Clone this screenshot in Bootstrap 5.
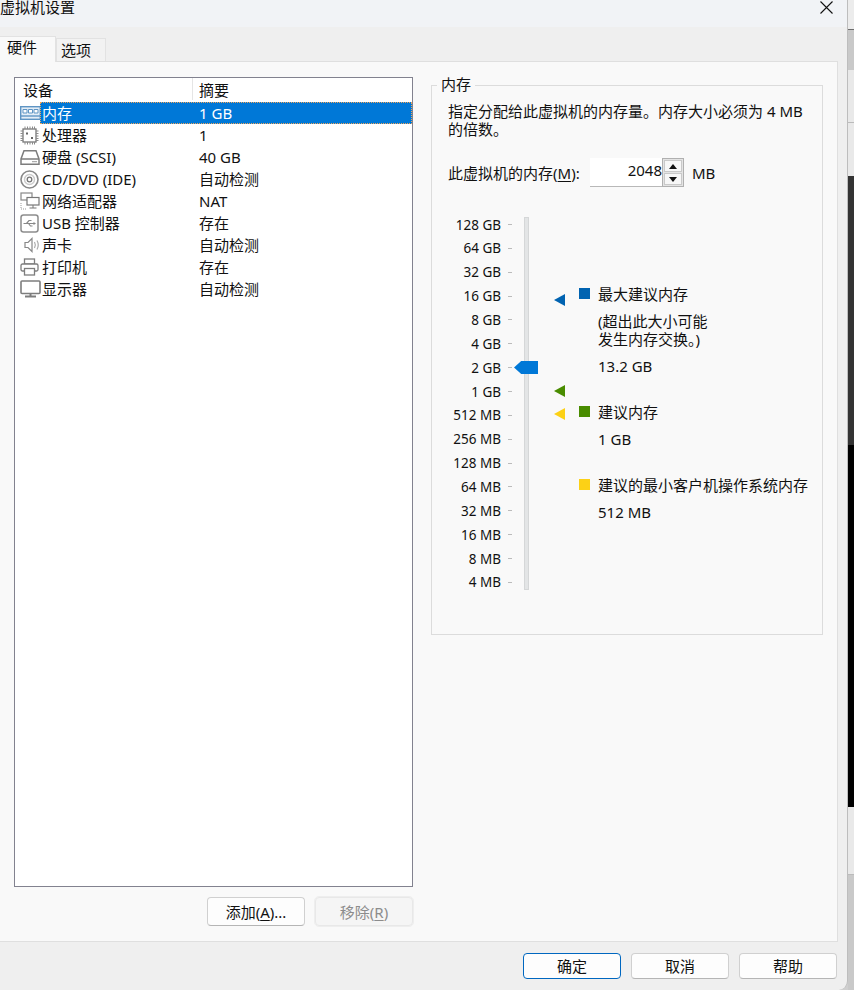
<!DOCTYPE html>
<html lang="zh">
<head>
<meta charset="utf-8">
<title>虚拟机设置</title>
<link href="https://cdn.jsdelivr.net/npm/bootstrap@5.3.0/dist/css/bootstrap.min.css" rel="stylesheet">
<style>
html,body{margin:0;height:990px;overflow:hidden;background:#cfcfcf}
body{font-family:"Noto Sans","Noto Sans CJK SC",sans-serif;font-size:15px;line-height:22px;color:#111}
.vmwin{width:848px;height:990px;background:#efefef;border-bottom-right-radius:9px;border-right:1px solid #bdbdbd;flex:none}
.edge{width:6px;height:990px;background:#e8e8e8;flex:none}
.edge-a{height:29px;background:#ececec}
.edge-b{height:41px;background:#c9c9c9;border-top:1px solid #6d6d6d}
.edge-c{height:53px;background:#e9e9e9;border-bottom:1px solid #bbb}
.edge-d{height:53px;background:#e9e9e9}
.edge-e{height:269px;background:#333}
.edge-f{height:362px;background:#000}
.edge-g{height:68px;background:#e9e9e9;border-bottom:1px solid #bbb}
.edge-h{flex:1;background:#c9c9c9}
.titlebar{height:27px;background:#f1f3f6;padding-right:14px}
.titlebar span{line-height:15px;font-size:15px}
.titlebar svg{margin-top:1px}
.tabrow{height:34px;padding-top:9px}
.vmtab{text-align:left;padding-left:4px;border:1px solid #e2e2e2;border-bottom:0;background:#f2f2f2;height:23px;margin-top:2px;width:50px;line-height:22px}
.vmtab.on{background:#f9f9f9;width:56px;height:26px;margin-top:0;padding-left:7px;line-height:21px;border-left:0;position:relative;z-index:1;margin-bottom:-1px}
.panel{width:838px;height:881px;background:#f9f9f9;border:1px solid #dfdfdf;border-left:0;padding:15px 14px 0 14px}
.leftcol{width:400px}
.devlist{height:810px;background:#fff;border:1px solid #82828f}
.devhead{height:24px;line-height:24px;padding-left:8px}
.devhead div:first-child{width:170px;border-right:1px solid #e5e5e5;height:22px}
.devhead div:last-child{padding-left:6px}
.devrow{height:22px;line-height:22px}
.devico{width:25px;height:22px;flex:none;padding-left:5px;display:flex;align-items:center}
.devico svg{flex:none}
.devname{width:153px;flex:none;padding-left:2px}
.devval{padding-left:6px}
.seltext{display:flex;flex:1}
.devrow.sel .seltext{background:#0078d7;color:#fff;outline:1px dotted #f2a65a;outline-offset:-1px}
.uline{text-decoration:underline;text-underline-offset:2px}
.winbtn{width:98px;height:29px;background:#fdfdfd;border:1px solid #d0d0d0;border-bottom-color:#b5b5b5;border-radius:4px;font-size:15px;line-height:26px;padding:0;color:#111}
.winbtn.pri{border-color:#0067c0}
.winbtn.off{background:#f5f5f5;color:#8c8c8c;border:1px solid #e8e8e8;outline:1px solid #eee}
.leftbtns{gap:10px;margin-top:10px}
.rightcol{margin-left:18px;width:392px;padding-top:8px}
.grp{height:550px;border:1px solid #dcdcdc;position:relative;padding:17px 15px 0 16px}
.grp-title{position:absolute;left:5px;top:-12px;background:#f9f9f9;padding:0 4px;line-height:20px}
.desc{line-height:17.500px;width:360px}
.spinrow{margin-top:20px;height:29px}
.spinlabel{width:134px;flex:none;white-space:nowrap}
.spinval{width:72px;height:29px;background:#fff;border-bottom:1px solid #b8b8b8;text-align:right;padding-right:0;line-height:25px;margin-left:8px}
.spinbtns{width:22px;height:29px;border:1px solid #b0b0b0;background:#e4e4e4;display:flex;flex-direction:column;gap:1px;padding:1px}
.spinbtns div{flex:1;background:#f7f7f7;display:flex;align-items:center;justify-content:center;border:1px solid #c9c9c9}
.spinunit{margin-left:8px}
.scale{margin-top:30px;height:373px}
.ticks{width:53px;text-align:right;margin-top:-4.500px;font-size:13.500px;flex:none}
.ticks div{height:23.870px;line-height:24px;white-space:nowrap}
.tickmarks{width:8px;margin-left:7px;margin-top:-4.500px;flex:none}
.tickmarks div{height:23.870px;display:flex;align-items:center}
.tickmarks i{display:block;width:4px;height:1px;background:#bbb}
.track{width:5px;height:373px;background:#e3e5e6;border:1px solid #d5d7d8;margin-left:8px;position:relative;flex:none}
.thumb{position:absolute;left:-11px;top:143px;width:24px;height:13px;background:#0078d7;clip-path:polygon(0 50%,30% 0,100% 0,100% 100%,30% 100%)}
.markers{width:40px;position:relative;flex:none}
.mark-arrow{position:absolute;left:25px;width:0;height:0;border-top:6px solid transparent;border-bottom:6px solid transparent;border-right-width:11px;border-right-style:solid}
.legend{position:relative;flex:1}
.lblock{position:absolute;left:10px}
.lblock .sq{position:absolute;left:0;top:3px;width:11px;height:11px}
.lblock p{margin:0 0 0 19px;white-space:nowrap;line-height:18px}
.lblock p+p{margin-top:9px}
.footer{padding:11px 10px 0 0;gap:10px}
.footer .winbtn{height:26px;line-height:23px;width:98px}
.arrow-blue{top:77px;border-right-color:#0063b1}
.arrow-green{top:168px;border-right-color:#498c00}
.arrow-yellow{top:191px;border-right-color:#fcd116}
.block-a{top:68px}.block-b{top:186px}.block-c{top:259px}
.sq-blue{background:#0063b1}.sq-green{background:#498c00}.sq-yellow{background:#fcd116}
</style>
</head>
<body class="d-flex">
<div class="vmwin d-flex flex-column">
  <div class="titlebar d-flex justify-content-between">
    <span>虚拟机设置</span>
    <svg width="13" height="13" viewBox="0 0 13 13" aria-hidden="true"><path d="M.5.5 12.500 12.500M12.500.5.5 12.500" stroke="#111" stroke-width="1.100" fill="none"/></svg>
  </div>
  <div class="tabrow d-flex align-items-start">
    <div class="vmtab on">硬件</div>
    <div class="vmtab">选项</div>
  </div>
  <div class="panel d-flex">
    <div class="leftcol d-flex flex-column">
      <div class="devlist">
        <div class="devhead d-flex"><div>设备</div><div>摘要</div></div>
        <div class="devrow sel d-flex"><div class="devico"><svg width="21" height="16" viewBox="0 0 21 16"><rect x=".7" y="1.700" width="19.600" height="12.600" fill="#e4eef7" stroke="#5f95c4" stroke-width="1.400"/><path d="M3 4.500h4v3.500H3zM8.500 4.500h4v3.500h-4zM14 4.500h4v3.500h-4z" fill="#fff" stroke="#5f95c4"/><path d="M1 11h19" stroke="#5f95c4" stroke-width="1.400"/></svg></div><div class="seltext"><div class="devname">内存</div><div class="devval">1 GB</div></div></div>
        <div class="devrow d-flex"><div class="devico"><svg width="19" height="19" viewBox="0 0 19 19"><rect x="3" y="3" width="13" height="13" fill="#fff" stroke="#777" stroke-width="1.300"/><path d="M5 .5v2.500M7.500 .5v2.500M10 .5v2.500M12.500 .5v2.500M14.500 .5v2.500M5 16v2.500M7.500 16v2.500M10 16v2.500M12.500 16v2.500M14.500 16v2.500M.5 5h2.500M.5 7.500h2.500M.5 10h2.500M.5 12.500h2.500M.5 14.500h2.500M16 5h2.500M16 7.500h2.500M16 10h2.500M16 12.500h2.500M16 14.500h2.500" stroke="#8a8a8a"/><rect x="6" y="6.500" width="2" height="2" fill="#666"/><rect x="11" y="11" width="2" height="2" fill="#666"/></svg></div><div class="devname">处理器</div><div class="devval">1</div></div>
        <div class="devrow d-flex"><div class="devico"><svg width="20" height="17" viewBox="0 0 20 17"><path d="M4 1.700h12l3 8.300v5.300H1V10z" fill="#fff" stroke="#7d7d7d" stroke-width="1.500"/><path d="M1 10h18" stroke="#7d7d7d" stroke-width="1.500"/><path d="M12 12.700h5" stroke="#999"/></svg></div><div class="devname">硬盘 (SCSI)</div><div class="devval">40 GB</div></div>
        <div class="devrow d-flex"><div class="devico"><svg width="19" height="19" viewBox="0 0 19 19"><circle cx="9.500" cy="9.500" r="8.500" fill="#fff" stroke="#888" stroke-width="1.600"/><circle cx="9.500" cy="9.500" r="5" fill="none" stroke="#ccc" stroke-width="1.500"/><circle cx="9.500" cy="9.500" r="2.300" fill="none" stroke="#777" stroke-width="1.300"/></svg></div><div class="devname">CD/DVD (IDE)</div><div class="devval">自动检测</div></div>
        <div class="devrow d-flex"><div class="devico"><svg width="20" height="18" viewBox="0 0 20 18"><rect x="1" y="1" width="11" height="7" fill="#fff" stroke="#888" stroke-width="1.200"/><rect x="7" y="5.500" width="12" height="7.500" fill="#fff" stroke="#777" stroke-width="1.200"/><path d="M13 13v3M9.500 16h7" stroke="#777"/><path d="M1 11v6h6" stroke="#999" stroke-dasharray="1 1" fill="none"/></svg></div><div class="devname">网络适配器</div><div class="devval">NAT</div></div>
        <div class="devrow d-flex"><div class="devico"><svg width="19" height="19" viewBox="0 0 19 19"><rect x="1" y="1" width="17" height="17" rx="2.500" fill="#fff" stroke="#8d8d8d" stroke-width="1.500"/><path d="M3.500 9.500h11M6.500 9.500l2.500-3h2.500M8.500 9.500l2 2.500h2" stroke="#888" stroke-width="1.200" fill="none"/><path d="M16 9.500 13.500 8v3z" fill="#888"/></svg></div><div class="devname">USB 控制器</div><div class="devval">存在</div></div>
        <div class="devrow d-flex"><div class="devico"><svg width="18" height="16" viewBox="0 0 18 16" class="ms-1"><path d="M1 5.500h3l4-4v13l-4-4H1z" fill="#fff" stroke="#888" stroke-width="1.200"/><path d="M10.500 5c1 1.800 1 4.200 0 6M13 3.500c1.500 2.700 1.500 6.300 0 9" fill="none" stroke="#aaa" stroke-width="1.200"/></svg></div><div class="devname">声卡</div><div class="devval">自动检测</div></div>
        <div class="devrow d-flex"><div class="devico"><svg width="19" height="18" viewBox="0 0 19 18"><rect x="4.500" y="1" width="10" height="5" fill="#fff" stroke="#7d7d7d" stroke-width="1.300"/><rect x="1" y="6" width="17" height="7" rx="1.500" fill="#fff" stroke="#7d7d7d" stroke-width="1.300"/><rect x="4.500" y="10.500" width="10" height="6.500" fill="#fff" stroke="#7d7d7d" stroke-width="1.300"/></svg></div><div class="devname">打印机</div><div class="devval">存在</div></div>
        <div class="devrow d-flex"><div class="devico"><svg width="21" height="18" viewBox="0 0 21 18"><rect x="1" y="1" width="19" height="12.500" rx="1" fill="#fff" stroke="#7d7d7d" stroke-width="1.600"/><path d="M5 16.500h11" stroke="#7d7d7d" stroke-width="2"/><path d="M10.500 14v2" stroke="#7d7d7d" stroke-width="2"/></svg></div><div class="devname">显示器</div><div class="devval">自动检测</div></div>
      </div>
      <div class="leftbtns d-flex justify-content-end">
        <button type="button" class="winbtn">添加(<span class="uline">A</span>)...</button>
        <button type="button" class="winbtn off" disabled>移除(<span class="uline">R</span>)</button>
      </div>
    </div>
    <div class="rightcol">
      <div class="grp">
        <div class="grp-title">内存</div>
        <div class="desc">指定分配给此虚拟机的内存量。内存大小必须为 4 MB 的倍数。</div>
        <div class="spinrow d-flex align-items-center">
          <div class="spinlabel">此虚拟机的内存(<span class="uline">M</span>):</div>
          <div class="spinval">2048</div>
          <div class="spinbtns">
            <div><svg width="8" height="5" viewBox="0 0 8 5"><path d="M4 0 8 5H0z" fill="#111"/></svg></div>
            <div><svg width="8" height="5" viewBox="0 0 8 5"><path d="M4 5 8 0H0z" fill="#111"/></svg></div>
          </div>
          <div class="spinunit">MB</div>
        </div>
        <div class="scale d-flex">
          <div class="ticks">
            <div>128 GB</div><div>64 GB</div><div>32 GB</div><div>16 GB</div><div>8 GB</div><div>4 GB</div><div>2 GB</div><div>1 GB</div><div>512 MB</div><div>256 MB</div><div>128 MB</div><div>64 MB</div><div>32 MB</div><div>16 MB</div><div>8 MB</div><div>4 MB</div>
          </div>
          <div class="tickmarks"><div><i></i></div><div><i></i></div><div><i></i></div><div><i></i></div><div><i></i></div><div><i></i></div><div><i></i></div><div><i></i></div><div><i></i></div><div><i></i></div><div><i></i></div><div><i></i></div><div><i></i></div><div><i></i></div><div><i></i></div><div><i></i></div></div>
          <div class="track"><div class="thumb"></div></div>
          <div class="markers">
            <div class="mark-arrow arrow-blue"></div>
            <div class="mark-arrow arrow-green"></div>
            <div class="mark-arrow arrow-yellow"></div>
          </div>
          <div class="legend">
            <div class="lblock block-a"><span class="sq sq-blue"></span><p>最大建议内存</p><p>(超出此大小可能<br>发生内存交换。)</p><p>13.2 GB</p></div>
            <div class="lblock block-b"><span class="sq sq-green"></span><p>建议内存</p><p>1 GB</p></div>
            <div class="lblock block-c"><span class="sq sq-yellow"></span><p>建议的最小客户机操作系统内存</p><p>512 MB</p></div>
          </div>
        </div>
      </div>
    </div>
  </div>
  <div class="footer d-flex justify-content-end">
    <button type="button" class="winbtn pri">确定</button>
    <button type="button" class="winbtn">取消</button>
    <button type="button" class="winbtn">帮助</button>
  </div>
</div>
<div class="edge d-flex flex-column">
  <div class="edge-a"></div><div class="edge-b"></div><div class="edge-c"></div><div class="edge-d"></div><div class="edge-e"></div><div class="edge-f"></div><div class="edge-g"></div><div class="edge-h"></div>
</div>
<script src="https://cdn.jsdelivr.net/npm/bootstrap@5.3.0/dist/js/bootstrap.bundle.min.js"></script>
</body>
</html>
